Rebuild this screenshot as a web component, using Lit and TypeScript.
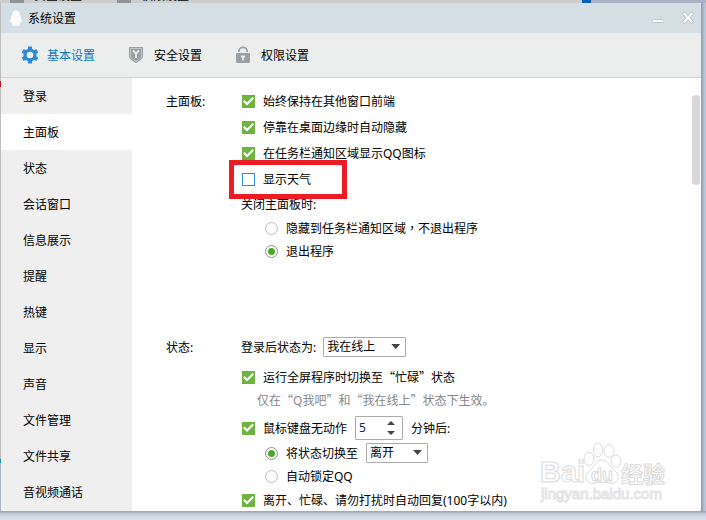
import { LitElement, html, css, svg } from "lit";
import { customElement, property, state } from "lit/decorators.js";
import { classMap } from "lit/directives/class-map.js";

const controls = css`
  * { box-sizing: border-box; }
  button, input, select { font: inherit; color: inherit; margin: 0; }
  button { border: 0; padding: 0; background: none; }
  .wide { font-family: "Noto Sans CJK SC", sans-serif; line-height: 1px; }
  .mid { font-family: "Noto Sans CJK TC", sans-serif; line-height: 1px; }
`;

// Curly quotes take a full character cell, so they use the CJK face;
// the comma sits in the middle of its cell, as in the TC face.
const quoted = (text: string) =>
  text.split(/([“”，])/).map((part) =>
    part === "，"
      ? html`<span class="mid" lang="zh-TW">${part}</span>`
      : /[“”]/.test(part)
        ? html`<span class="wide">${part}</span>`
        : part,
  );

const gear = html`<svg width="18" height="18" viewBox="0 0 18 18">
  <g fill="#2a8ad8">
    ${[0, 60, 120].map((a) => svg`<rect x="7" y="0.5" width="4" height="17" rx="0.6" transform="rotate(${a} 9 9)"/>`)}
    <circle cx="9" cy="9" r="6.5"/>
  </g>
  <circle cx="9" cy="9" r="3.3" fill="#eceeee"/>
</svg>`;

const shield = html`<svg width="18" height="18" viewBox="0 0 18 18">
  <path d="M1 1h14v9c0 3-3.500 5-7 7c-3.500-2-7-4-7-7z" fill="#98a0a6"/>
  <path d="M2.500 2.500h11v7.500c0 2-2.500 3.700-5.500 5.400c-3-1.700-5.500-3.400-5.500-5.400z" fill="none" stroke="#c9ced1" stroke-width="0.800"/>
  <path d="M5 4.500l3 3l3-3M8 7v5" fill="none" stroke="#e6e9ea" stroke-width="1.800"/>
</svg>`;

const lock = html`<svg width="18" height="18" viewBox="0 0 18 18">
  <path d="M3.800 6V5.500a4.200 4.200 0 0 1 8.400 0V6" fill="none" stroke="#98a0a6" stroke-width="1.700"/>
  <rect x="1" y="7" width="14" height="10" rx="1" fill="#98a0a6"/>
  <path d="M6 9.500h4v2h-1.200v3h-1.600v-3h-1.200z" fill="#eceeee"/>
</svg>`;

const penguin = html`<svg width="14" height="18" viewBox="0 0 14 18">
  <path d="M7 1C4.200 1 2.700 3 2.700 6C1.400 8 .6 10.500.6 12.500c0 1.300.8 1.500 1.500.7c.2.900.6 1.600 1.100 2.200c-1 .6-.8 1.800.5 1.800h6.600c1.300 0 1.500-1.200.5-1.800c.5-.6.9-1.300 1.100-2.200c.7.8 1.500.6 1.500-.7c0-2-.8-4.500-2.100-6.500C11.300 3 9.800 1 7 1z" fill="#fff" stroke="#c2cdd4" stroke-width="0.600"/>
</svg>`;

@customElement("qq-choice")
class QqChoice extends LitElement {
  @property() kind = "checkbox";
  @property() label = "";
  @property({ type: Boolean }) on = false;

  static styles = [controls, css`
    :host { display: inline-flex; }
    label { display: flex; align-items: center; gap: 8px; line-height: 15px; white-space: nowrap; }
    input { appearance: none; display: grid; place-items: center; width: 13px; height: 13px; border: 1px solid #2f8de0; background: #fff; }
    .checkbox:checked { border-color: #6cb33f; background: #6cb33f; }
    .checkbox:checked::before { content: ""; width: 11px; height: 11px; background: #fff; clip-path: polygon(0 50%, 14% 37%, 37% 59%, 86% 10%, 100% 23%, 37% 87%); }
    .radio { border-color: #bdbdbd; border-radius: 50%; }
    .radio:checked { border-color: #8f8f8f; }
    .radio:checked::before { content: ""; width: 7px; height: 7px; border-radius: 50%; background: #4ea72a; }
  `];

  render() {
    return html`<label><input class=${this.kind} type=${this.kind} .checked=${this.on}><span>${quoted(this.label)}</span></label>`;
  }
}

@customElement("qq-select")
class QqSelect extends LitElement {
  @property() value = "";
  @property() label = "";

  static styles = [controls, css`
    :host { display: inline-flex; }
    .box { position: relative; display: flex; flex: 1; }
    .box::after { content: ""; position: absolute; right: 6px; top: 7px; width: 9px; height: 5px; background: #444; clip-path: polygon(0 0, 100% 0, 50% 100%); pointer-events: none; }
    select { appearance: none; flex: 1; width: 100%; height: 20px; padding: 0 16px 0 3px; border: 1px solid #ababab; border-radius: 1px; background: #fff; line-height: 16px; }
  `];

  render() {
    return html`<div class="box"><select aria-label=${this.label}><option>${this.value}</option></select></div>`;
  }
}

@customElement("baidu-mark")
class BaiduMark extends LitElement {
  static styles = css`
    :host { display: block; }
    svg { display: block; }
    text { font-family: "Liberation Sans", "Noto Sans CJK SC", sans-serif; font-weight: bold; fill: #fff; stroke: #dadada; stroke-width: 1px; }
    .big { font-size: 29px; }
    .du { font-size: 18px; }
    .cn { font-size: 22px; }
    .url { font-size: 15px; font-weight: normal; stroke: #e2e2e2; }
    .paw { fill: #fff; stroke: #dadada; }
  `;

  render() {
    return html`<svg width="128" height="64" viewBox="0 0 128 64">
      <text class="big" x="0" y="41">Bai</text>
      <g class="paw">
        <ellipse cx="49" cy="18" rx="5" ry="6.500"/>
        <ellipse cx="58" cy="9" rx="4.500" ry="7"/>
        <ellipse cx="69" cy="10" rx="5" ry="6.500"/>
        <ellipse cx="76" cy="20" rx="5" ry="6"/>
        <path d="M62 19c5 0 6 4 9 7c4 4 7 6 7 10c0 6-5 7-9 6c-5-1-9-1-14 0c-5 1-9-1-9-6c0-4 4-6 7-10c3-3 4-7 9-7z"/>
      </g>
      <text class="du" x="51" y="40">du</text>
      <text class="cn" x="81" y="41">经验</text>
      <text class="url" x="1" y="58">jingyan.baidu.com</text>
    </svg>`;
  }
}

@customElement("app-root")
class AppRoot extends LitElement {
  @state() private page = "主面板";
  @state() private minutes = 5;

  private pages = ["登录", "主面板", "状态", "会话窗口", "信息展示", "提醒", "热键", "显示", "声音", "文件管理", "文件共享", "音视频通话"];
  private tabs = [
    { name: "基本设置", icon: gear, on: true },
    { name: "安全设置", icon: shield, on: false },
    { name: "权限设置", icon: lock, on: false },
  ];

  static styles = [controls, css`
    :host {
      display: grid;
      grid-template: 3px minmax(0, 1fr) 9px / 1px minmax(0, 1fr) 5px;
      height: 100vh;
      overflow: hidden;
      background: #d6e0ec;
      color: #000;
      font: 12px/15px "Noto Sans", "Noto Sans CJK SC", sans-serif;
    }
    .behind { grid-column: 1 / -1; display: flex; align-items: flex-end; overflow: hidden; padding-left: 10px; background: linear-gradient(90deg, transparent 582px, #0a62b4 582px 591px, #aab3c3 591px), #cbcecd; }
    .behind i { flex: none; width: 14px; height: 3px; background: #8e9499; }
    .behind span { flex: none; width: 83px; padding-left: 10px; }
    .behind span + i { margin-left: 10px; }
    .edge { background: linear-gradient(#bdbdbd 78px, #c8101c 78px 84px, #bdbdbd 84px 456px, #1694bb 456px 460px, #a9b3c6 460px); }
    .shade { background: linear-gradient(90deg, #8d97a8, #b3bfd2 60%, #bac6da); }
    .floor { grid-column: 1 / -1; background: linear-gradient(#98a2b2, #c3cddb 3px, #d6e0ec 7px); }
    .window { display: flex; flex-direction: column; min-height: 0; overflow: hidden; border-radius: 3px; background: #fff; }
    header { flex: none; display: flex; align-items: center; height: 30px; padding: 0 6px 0 8px; background: #d4dfe5; }
    header svg { display: block; }
    h1 { flex: 1; margin: 0 0 0 5px; font-size: 12px; font-weight: normal; }
    .tools { display: flex; gap: 16px; }
    nav.tabs { flex: none; display: flex; align-items: center; gap: 33px; height: 45px; padding-left: 20px; border-bottom: 1px solid #d3d3d3; background: #eceeee; }
    .tab { display: flex; align-items: center; gap: 8px; white-space: nowrap; }
    .tab svg { display: block; }
    .tab.on { color: #0b77bd; }
    .body { position: relative; flex: 1; display: flex; min-height: 0; }
    .pages { flex: none; width: 131px; overflow: hidden; background: #efefef; }
    .page { display: block; width: 100%; height: 36px; padding-left: 22px; text-align: left; }
    .page.on { background: #fff; }
    main { flex: 1; min-width: 0; overflow: hidden; padding: 16px 24px 0 34px; }
    section { display: grid; grid-template-columns: 75px 1fr; }
    section + section { margin-top: 78px; }
    h2 { margin: 0; font-size: 12px; font-weight: normal; line-height: 15px; }
    .status h2 { line-height: 21px; }
    .stack { display: flex; flex-direction: column; align-items: flex-start; }
    .checks { gap: 11px; margin: 0 0 10px 1px; }
    .radios { gap: 8px; margin: 9px 0 0 24px; }
    .marked { position: relative; display: flex; }
    .marked::after { content: ""; position: absolute; inset: -12px -36px -12px -13px; border: 5px solid #ed1c24; pointer-events: none; }
    .row { display: flex; align-items: center; gap: 7px; height: 20px; }
    .full { margin: 13px 0 8px 1px; }
    .note { margin: 0 0 8px 16px; color: #868686; white-space: nowrap; }
    .idle { gap: 8px; height: 24px; margin-left: 1px; }
    .switch { gap: 8px; margin: 3px 0 6px 24px; }
    .lock { margin: 0 0 9px 24px; }
    .reply { margin-left: 1px; }
    .online { width: 83px; }
    .away { width: 62px; }
    .spin { position: relative; display: flex; width: 48px; }
    .spin input { appearance: textfield; width: 100%; height: 24px; padding: 0 16px 2px 3px; border: 1px solid #ababab; border-radius: 1px; background: #fff; color: #10226e; }
    .spin input::-webkit-inner-spin-button { appearance: none; }
    .steps { position: absolute; right: 8px; top: 5px; display: grid; gap: 6px; }
    .step { width: 8px; height: 4px; background: #444; }
    .up { clip-path: polygon(50% 0, 100% 100%, 0 100%); }
    .down { clip-path: polygon(0 0, 100% 0, 50% 100%); }
    .thumb { position: absolute; right: 1px; top: 17px; width: 8px; height: 90px; border-radius: 4px; background: #d7d7d7; }
    baidu-mark { position: absolute; right: 33px; bottom: 6px; pointer-events: none; }
  `];

  render() {
    return html`
      <div class="behind" aria-hidden="true"><i></i><span>安全设置</span><i></i><span>权限设置</span></div>
      <div class="edge"></div>
      <div class="window">
        <header>
          ${penguin}
          <h1>系统设置</h1>
          <div class="tools">
            <button aria-label="最小化"><svg width="14" height="14" viewBox="0 0 14 14"><rect x="1.500" y="8.500" width="11" height="3" rx="1" fill="#fff" stroke="#bac5cc"/></svg></button>
            <button aria-label="关闭"><svg width="14" height="14" viewBox="0 0 14 14" stroke-linecap="square"><path d="M3.500 3l7 7.500M10.500 3l-7 7.500" stroke="#b6c2ca" stroke-width="3.600"/><path d="M3.500 3l7 7.500M10.500 3l-7 7.500" stroke="#fff" stroke-width="2"/></svg></button>
          </div>
        </header>
        <nav class="tabs">
          ${this.tabs.map((t) => html`<button class=${classMap({ tab: true, on: t.on })}>${t.icon}<span>${t.name}</span></button>`)}
        </nav>
        <div class="body">
          <nav class="pages">
            ${this.pages.map((p) => html`<button class=${classMap({ page: true, on: p === this.page })} @click=${() => (this.page = p)}>${p}</button>`)}
          </nav>
          <main>
            <section>
              <h2>主面板:</h2>
              <div>
                <div class="stack checks">
                  <qq-choice on label="始终保持在其他窗口前端"></qq-choice>
                  <qq-choice on label="停靠在桌面边缘时自动隐藏"></qq-choice>
                  <qq-choice on label="在任务栏通知区域显示QQ图标"></qq-choice>
                  <div class="marked"><qq-choice label="显示天气"></qq-choice></div>
                </div>
                <div>关闭主面板时:</div>
                <div class="stack radios">
                  <qq-choice kind="radio" label="隐藏到任务栏通知区域，不退出程序"></qq-choice>
                  <qq-choice kind="radio" on label="退出程序"></qq-choice>
                </div>
              </div>
            </section>
            <section class="status">
              <h2>状态:</h2>
              <div class="stack">
                <div class="row"><span>登录后状态为:</span><qq-select class="online" label="登录后状态为" value="我在线上"></qq-select></div>
                <qq-choice class="full" on label="运行全屏程序时切换至“忙碌”状态"></qq-choice>
                <div class="note">${quoted("仅在“Q我吧”和“我在线上”状态下生效。")}</div>
                <div class="row idle">
                  <qq-choice on label="鼠标键盘无动作"></qq-choice>
                  <div class="spin">
                    <input type="number" aria-label="分钟" .value=${String(this.minutes)}>
                    <div class="steps">
                      <button class="step up" aria-label="增加" @click=${() => this.minutes++}></button>
                      <button class="step down" aria-label="减少" @click=${() => this.minutes--}></button>
                    </div>
                  </div>
                  <span>分钟后:</span>
                </div>
                <div class="row switch"><qq-choice kind="radio" on label="将状态切换至"></qq-choice><qq-select class="away" label="切换至" value="离开"></qq-select></div>
                <qq-choice class="lock" kind="radio" label="自动锁定QQ"></qq-choice>
                <qq-choice class="reply" on label="离开、忙碌、请勿打扰时自动回复(100字以内)"></qq-choice>
              </div>
            </section>
          </main>
          <div class="thumb"></div>
          <baidu-mark></baidu-mark>
        </div>
      </div>
      <div class="shade"></div>
      <div class="floor"></div>
    `;
  }
}
